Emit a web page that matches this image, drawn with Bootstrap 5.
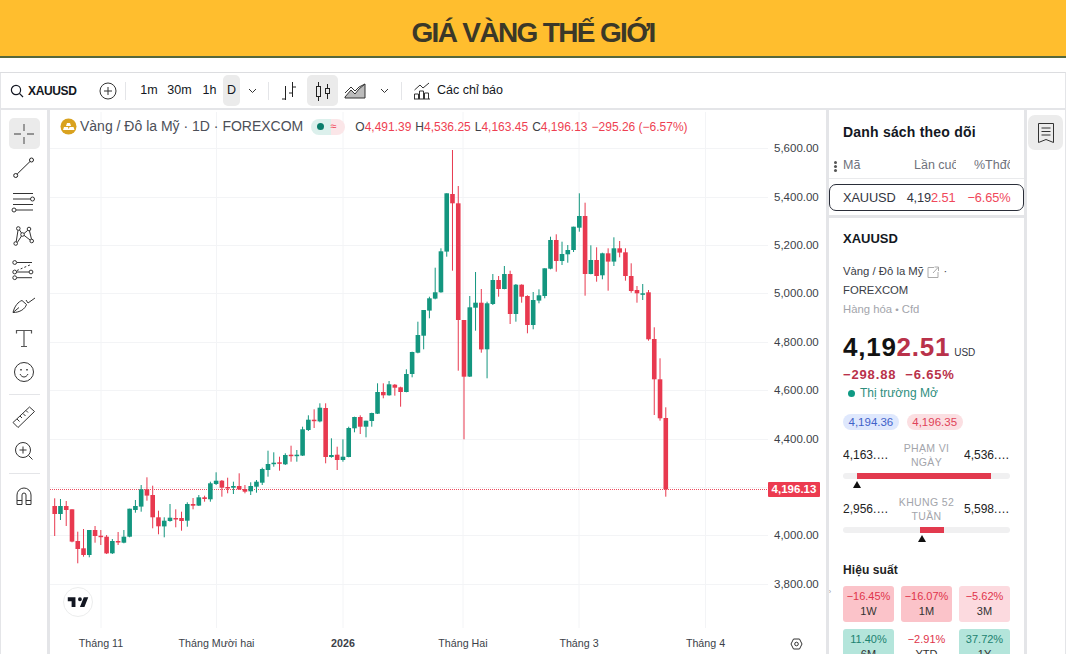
<!DOCTYPE html>
<html lang="vi">
<head>
    <meta charset="UTF-8">
    <meta name="viewport" content="width=device-width, initial-scale=1.0">
    <title>Giá vàng thế giới</title>
    <link href="https://cdn.jsdelivr.net/npm/bootstrap@5.3.0/dist/css/bootstrap.min.css" rel="stylesheet">
    <style>
        html, body { height: 100%; }
        body {
            font-family: "Liberation Sans", Arial, sans-serif;
            color: #131722;
            background: #fff;
            overflow: hidden;
        }
        .page-head {
            height: 58px;
            padding-top: 9px;
            background: #ffbe2e;
            border-bottom: 2px solid #56683c;
        }
        .page-head h1 {
            font-size: 28px;
            font-weight: 700;
            letter-spacing: -1.65px;
            color: #3b3828;
            margin: 0;
        }
        .tv-widget {
            margin-top: 14px;
            height: 582px;
            background: #e4e5e8;
            border-top: 1px solid #dcdde0;
            border-right: 1px solid #e4e5e8;
        }
        .top-bar {
            height: 35px;
            background: #fff;
            padding-left: 9px;
            border-left: 1px solid #e4e5e8;
            font-size: 12px;
        }
        .sym-name { font-weight: 700; font-size: 12px; letter-spacing: -.35px; margin-left: 4px; width: 71px; }
        .bar-sep { width: 1px; height: 18px; background: #e4e5e8; }
        .tf-btn {
            height: 31px;
            padding: 0;
            border: 0;
            border-radius: 5px;
            font-size: 12.5px;
            color: #131722;
            background: transparent;
            display: flex;
            align-items: center;
            justify-content: center;
        }
        .tf-active { background: #ebebeb; }
        .main-row { margin-top: 2px; height: 544px; gap: 3px; }
        .draw-bar { width: 47px; background: #fff; padding-top: 7px; flex: none; border-left: 1px solid #e4e5e8; }
        .draw-item { width: 31px; height: 34px; display: flex; align-items: center; justify-content: center; flex: none; }
        .draw-active { background: #ebebeb; border-radius: 5px; height: 31px; margin: 1px 0 2px; }
        .draw-sep { width: 31px; height: 1px; background: #e4e5e8; margin: 5px 0; flex: none; }
        .chart-pane { width: 776px; flex: none; background: #fff; overflow: hidden; }
        .chart-pane svg { display: block; }
        .chart-legend {
            position: absolute;
            left: 10px;
            top: 6px;
            font-size: 14px;
            color: #4c4f58;
            white-space: nowrap;
        }
        .coin { margin-right: 3px; }
        .status-pill {
            margin-left: 8px;
            width: 34px;
            height: 16px;
            border-radius: 8px;
            background: linear-gradient(90deg, #dcf0ec 60%, #fbe6e8 60%);
            font-size: 11px;
            color: #ef4a5c;
        }
        .status-dot { width: 7px; height: 7px; border-radius: 50%; background: #0b7d6b; margin: 0 6px 0 6px; }
        .ohlc { font-size: 12px; margin-left: 10px; color: #3d3f47; }
        .ohlc b { font-weight: 400; color: #ee3f52; margin-right: 4px; }
        .watch-pane { width: 195px; flex: none; background: #e4e5e8; overflow: hidden; }
        .watch-list { background: #fff; height: 105px; }
        .watch-title { font-weight: 700; font-size: 14px; letter-spacing: .2px; padding: 12px 0 0 14px; height: 42px; color: #131722; }
        .watch-head { height: 27px; font-size: 12.5px; color: #6f727c; border-bottom: 1px solid #e9eaec; padding-left: 14px; position: relative; }
        .dots { position: absolute; left: 5px; top: 9px; width: 3px; height: 3px; border-radius: 50%; background: #555; box-shadow: 0 4px 0 #555, 0 8px 0 #555; }
        .col-last { margin-left: 55px; width: 42px; overflow: hidden; white-space: nowrap; }
        .col-chg { margin-left: 18px; width: 36px; overflow: hidden; white-space: nowrap; }
        .watch-sel {
            margin: 5px 0 0;
            height: 27px;
            border: 1px solid #2a2e39;
            border-radius: 7px;
            padding-left: 13px;
            font-size: 12.8px;
            letter-spacing: -.12px;
            color: #33363f;
        }
        .red-soft { color: #f0475a; }
        .sel-price { margin-left: 11px; }
        .sel-chg { margin-left: 12px; }
        .detail-box { background: #fff; height: 440px; margin-top: 3px; padding: 13px 14px; }
        .detail-sym { font-size: 13px; font-weight: 700; line-height: 16px; }
        .detail-line { font-size: 11.3px; line-height: 19px; color: #3a3d46; }
        .detail-gray { color: #a3a5ab; }
        .big-price { font-size: 26px; font-weight: 700; letter-spacing: .75px; line-height: 30px; color: #121212; margin-top: 13px; }
        .big-price b, .big-chg { color: #b9324a; }
        .big-cur { font-size: 10px; font-weight: 400; letter-spacing: 0; color: #33363f; margin-left: 0; }
        .big-chg { font-size: 13px; font-weight: 700; letter-spacing: .85px; line-height: 16px; margin-top: -1px; }
        .market-open { font-size: 12px; line-height: 16px; color: #2d8e7e; margin-top: 2px; padding-left: 5px; }
        .market-dot { width: 7px; height: 7px; border-radius: 50%; background: #0f9a84; margin-right: 5px; }
        .quote-pills { margin-top: 13px; gap: 8px; }
        .quote-pill { font-size: 11.5px; line-height: 16px; height: 16px; padding: 0 5.5px; border-radius: 8px; }
        .pill-bid { background: #dfe8fd; color: #3f62c9; }
        .pill-ask { background: #fbdfe2; color: #e04359; }
        .range-row { font-size: 12px; color: #222; }
        .range-val { width: 46px; }
        .range-lbl { font-size: 10.5px; line-height: 14px; color: #a3a5ab; text-align: center; flex: 1; letter-spacing: .35px; }
        .range-track { height: 6px; border-radius: 3px; background: #f0f0f1; position: relative; }
        .range-fill { position: absolute; top: 0; bottom: 0; background: #e23a4e; }
        .range-mark { position: absolute; top: 8px; width: 0; height: 0; border-left: 4.5px solid transparent; border-right: 4.5px solid transparent; border-bottom: 7px solid #111; }
        .perf-title { font-size: 12px; font-weight: 700; letter-spacing: .1px; color: #222; line-height: 16px; margin-top: 29px; }
        .perf-grid { display: grid; grid-template-columns: repeat(3, 51px); gap: 7px; margin-top: 8px; }
        .perf-tile { height: 36px; border-radius: 3px; text-align: center; font-size: 11px; line-height: 15px; padding-top: 3px; color: #e0344a; }
        .perf-tile span { display: block; color: #333; }
        .t-red { background: #fbc3c9; }
        .t-pale { background: #fcdadf; }
        .t-green { background: #b4e5db; color: #1c8270; }
        .tab-handle { position: absolute; left: -2px; top: 470px; width: 6px; height: 24px; background: #fff; border-radius: 3px; font-size: 7px; color: #999; line-height: 24px; text-align: center; }
        .side-rail { flex: 1; background: #fff; padding: 5px 1px; margin-left: -1px; border-left: 1px solid #e4e5e8; }
        .rail-btn { width: 35px; height: 35px; border-radius: 7px; background: #ececec; }
    </style>
</head>
<body>
    <header class="page-head d-flex align-items-center justify-content-center">
        <h1>GIÁ VÀNG THẾ GIỚI</h1>
    </header>

    <div class="tv-widget">
        <!-- top toolbar -->
        <div class="top-bar d-flex align-items-center">
            <svg width="14" height="14" viewBox="0 0 14 14" fill="none" stroke="#131722" stroke-width="1.2"><circle cx="6" cy="6" r="4.6"/><path d="M9.4 9.4 13 13"/></svg>
            <span class="sym-name">XAUUSD</span>
            <svg width="18" height="18" viewBox="0 0 18 18" fill="none" stroke="#333" stroke-width="1"><circle cx="9" cy="9" r="8"/><path d="M9 5v8M5 9h8"/></svg>
            <span class="bar-sep ms-2"></span>
            <button class="tf-btn" style="width:28px;margin-left:9px">1m</button>
            <button class="tf-btn" style="width:33px">30m</button>
            <button class="tf-btn" style="width:27px">1h</button>
            <button class="tf-btn tf-active" style="width:17px">D</button>
            <svg class="ms-2" width="9" height="6" viewBox="0 0 9 6" fill="none" stroke="#333"><path d="M1 1l3.5 3.5L8 1"/></svg>
            <span class="bar-sep" style="margin-left:11px"></span>
            <svg style="margin-left:11px" width="18" height="20" viewBox="0 0 18 20" fill="none" stroke="#222"><path d="M5.5 5v14M2 18h3.5M12.5 1v15M12.5 6H16M9 12h3.5"/></svg>
            <button class="tf-btn tf-active" style="width:31px;margin-left:9px">
                <svg width="16" height="22" viewBox="0 0 16 22" fill="none" stroke="#222"><rect x="1.5" y="6.5" width="4" height="10"/><path d="M3.5 2v4.5M3.5 16.5V21"/><rect x="10.5" y="8.5" width="4" height="5"/><path d="M12.5 4v4.5M12.5 13.5V19"/></svg>
            </button>
            <svg style="margin-left:6px" width="22" height="16" viewBox="0 0 22 16" fill="none" stroke="#333"><path d="M1 14 7 7l4 4 4-5 6-5v14H1z" fill="#bbb"/><path d="M1 10 7 4l4 4 4-4 6-3" /></svg>
            <svg style="margin-left:14px" width="9" height="6" viewBox="0 0 9 6" fill="none" stroke="#333"><path d="M1 1l3.5 3.5L8 1"/></svg>
            <span class="bar-sep" style="margin-left:12px"></span>
            <svg style="margin-left:11px" width="18" height="18" viewBox="0 0 18 18" fill="none" stroke="#333"><path d="M1.5 17V12h4v5M6.5 17V9h4v8M11.500 17V11h4v6M1 17h16"/><path d="M1.500 8 7 3l3 3 6-5"/></svg>
            <span style="font-size:12.5px;margin-left:6px">Các chỉ báo</span>
        </div>

        <div class="main-row d-flex">
            <!-- drawing tools -->
            <nav class="draw-bar d-flex flex-column align-items-center">
                <div class="draw-item draw-active"><svg width="28" height="28" viewBox="0 0 28 28" fill="none" stroke="#777" stroke-width="1.4"><path d="M4 14h7M17 14h7M14 4v7M14 17v7"/></svg></div>
                <div class="draw-item"><svg width="28" height="28" viewBox="0 0 28 28" fill="none" stroke="#222"><circle cx="5.700" cy="21.500" r="2"/><circle cx="21.500" cy="6" r="2"/><path d="M7.200 20 20 7.500"/></svg></div>
                <div class="draw-item"><svg width="28" height="28" viewBox="0 0 28 28" fill="none" stroke="#333"><path d="M3 5.500h20M3 11h17.500M3 16.500h20M6 22h17"/><circle cx="22.500" cy="11" r="2"/><circle cx="4" cy="22" r="2"/></svg></div>
                <div class="draw-item"><svg width="28" height="28" viewBox="0 0 28 28" fill="none" stroke="#333"><circle cx="8.300" cy="6.500" r="1.800"/><circle cx="19" cy="7" r="1.800"/><circle cx="12.500" cy="12.500" r="1.800"/><circle cx="5.700" cy="21.500" r="1.800"/><circle cx="21.700" cy="19" r="1.800"/><path d="M6.200 19.800 8 8.300M9.500 8l2 3M14 11.500l3.800-3.200M19.500 9l2 8.200M14 13.300l6.200 4.800M7.300 20.500l4.200-6.500"/></svg></div>
                <div class="draw-item"><svg width="28" height="28" viewBox="0 0 28 28" fill="none" stroke="#333"><circle cx="4.700" cy="6.500" r="1.900"/><circle cx="4.700" cy="16" r="1.900"/><circle cx="21" cy="16" r="1.900"/><circle cx="4.700" cy="21.700" r="1.900"/><path d="M7 6.500h15M7 16h12M7 21.700h15"/><path d="M7 14.500 21 8.500" stroke-dasharray="2 2"/></svg></div>
                <div class="draw-item"><svg width="28" height="28" viewBox="0 0 28 28" fill="none" stroke="#333"><path d="M3 22.500C4.500 16 8.500 11.500 12 10.500l4.500 4C15 19 10 22.500 3 22.500zM3 22.500l6-5"/><path d="M16 10l2 3 7-5"/></svg></div>
                <div class="draw-item"><svg width="28" height="28" viewBox="0 0 28 28" fill="none" stroke="#555" stroke-width="1.200"><path d="M6.500 9.500V6.500h15v3M14 6.500v16M11 22.500h6"/></svg></div>
                <div class="draw-item"><svg width="28" height="28" viewBox="0 0 28 28" fill="none" stroke="#333"><circle cx="14" cy="14" r="9.500"/><path d="M10 16c1 2 2.500 3 4 3s3-1 4-3"/><path d="M11 11v1.500M17 11v1.500" stroke-width="1.500"/></svg></div>
                <div class="draw-sep"></div>
                <div class="draw-item"><svg width="28" height="28" viewBox="0 0 28 28" fill="none" stroke="#333"><path d="M3 19.500 19.500 4l5 4.500L8 24.500z"/><path d="M7 16l2.500 2.500M10 13l2 2M13 10.500l2.500 2.500M16 7.500l2 2"/></svg></div>
                <div class="draw-item"><svg width="28" height="28" viewBox="0 0 28 28" fill="none" stroke="#333"><circle cx="13" cy="13" r="7.500"/><path d="M18.500 18.500l4 4M13 9.500v7M9.500 13h7"/></svg></div>
                <div class="draw-sep"></div>
                <div class="draw-item"><svg width="28" height="28" viewBox="0 0 28 28" fill="none" stroke="#333"><path d="M7 22.500V13a7 7 0 0 1 14 0v9.500h-5V13a2 2 0 0 0-4 0v9.500zM7 18.500h5M16 18.500h5"/></svg></div>
            </nav>

            <!-- chart -->
            <section class="chart-pane position-relative">
                <svg id="chart" width="776" height="544" viewBox="50 110 776 544"></svg>
                <div class="chart-legend d-flex align-items-center">
                    <svg class="coin" width="17" height="17" viewBox="0 0 17 17"><circle cx="8.500" cy="8.500" r="8" fill="#d9a21f"/><path d="M6 8l1-3h3l1 3zM3 12l1-3h4l1 3zM8.500 12l1-3h4l1 3z" fill="#fff"/></svg>
                    <span>Vàng / Đô la Mỹ · 1D · FOREXCOM</span>
                    <span class="status-pill d-flex align-items-center"><i class="status-dot"></i>≈</span>
                    <span class="ohlc">O<b>4,491.39</b>H<b>4,536.25</b>L<b>4,163.45</b>C<b>4,196.13</b><b>−295.26 (−6.57%)</b></span>
                </div>
            </section>

            <!-- watchlist -->
            <aside class="watch-pane position-relative">
                <div class="watch-list">
                    <div class="watch-title">Danh sách theo dõi</div>
                    <div class="watch-head d-flex align-items-center">
                        <i class="dots"></i>
                        <span style="width:16px">Mã</span>
                        <span class="col-last">Lần cuối</span>
                        <span class="col-chg">%Thđổi</span>
                    </div>
                    <div class="watch-sel d-flex align-items-center">
                        <span>XAUUSD</span>
                        <span class="sel-price">4,19<span class="red-soft">2.51</span></span>
                        <span class="sel-chg red-soft">−6.65%</span>
                    </div>
                </div>
                <div class="detail-box">
                    <div class="detail-sym">XAUUSD</div>
                    <div class="detail-line d-flex align-items-center" style="margin-top:15px">Vàng / Đô la Mỹ
                        <svg class="mx-1" width="12" height="12" viewBox="0 0 12 12" fill="none" stroke="#aaa"><path d="M7 1.500H1v10h10V6M6 7l5-5.500M7.500 1h4v4"/></svg>·</div>
                    <div class="detail-line">FOREXCOM</div>
                    <div class="detail-line detail-gray">Hàng hóa <small>•</small> Cfd</div>
                    <div class="big-price">4,19<b>2.51</b><span class="big-cur ms-1">USD</span></div>
                    <div class="big-chg">−298.88 &nbsp;−6.65%</div>
                    <div class="market-open d-flex align-items-center"><i class="market-dot"></i>Thị trường Mở</div>

                    <div class="quote-pills d-flex">
                        <span class="quote-pill pill-bid">4,194.36</span>
                        <span class="quote-pill pill-ask">4,196.35</span>
                    </div>

                    <div class="range-row d-flex align-items-center" style="margin-top:11px">
                        <span class="range-val text-truncate">4,163.45</span>
                        <span class="range-lbl">PHẠM VI NGÀY</span>
                        <span class="range-val text-truncate">4,536.25</span>
                    </div>
                    <div class="range-track mt-1">
                        <i class="range-fill" style="left:14px;width:134px"></i>
                        <i class="range-mark" style="left:10px"></i>
                    </div>

                    <div class="range-row d-flex align-items-center" style="margin-top:16px">
                        <span class="range-val text-truncate">2,956.20</span>
                        <span class="range-lbl">KHUNG 52 TUẦN</span>
                        <span class="range-val text-truncate">5,598.75</span>
                    </div>
                    <div class="range-track mt-1">
                        <i class="range-fill" style="left:77px;width:24px"></i>
                        <i class="range-mark" style="left:75px"></i>
                    </div>

                    <div class="perf-title">Hiệu suất</div>
                    <div class="perf-grid">
                        <div class="perf-tile t-red">−16.45%<span>1W</span></div>
                        <div class="perf-tile t-red">−16.07%<span>1M</span></div>
                        <div class="perf-tile t-pale">−5.62%<span>3M</span></div>
                        <div class="perf-tile t-green">11.40%<span>6M</span></div>
                        <div class="perf-tile">−2.91%<span>YTD</span></div>
                        <div class="perf-tile t-green">37.72%<span>1Y</span></div>
                    </div>
                </div>
                <div class="tab-handle">›</div>
            </aside>

            <div class="side-rail">
                <div class="rail-btn d-flex align-items-center justify-content-center">
                    <svg width="22" height="26" viewBox="0 0 22 26" fill="none" stroke="#333"><path d="M3.500 3.500h15v19l-7.500-3-7.500 3zM6.500 8h9M6.500 11.500h9M6.500 15h9"/></svg>
                </div>
            </div>
        </div>
    </div>

    <script>
        // candles as [wick top, body top, body bottom, wick bottom, green?], read off in 3x pixels per block
        const G = 1, R = 0;
        const blocks = [
            [430, [[205,228,252,318,R],[207,228,252,270,G],[213,228,240,288,R],[238,238,335,337,R],[305,333,357,400,R],[297,355,375,380,R],[300,300,375,382,G],[288,300,318,338,R],[300,317,320,345,R],[315,320,370,372,R],[327,333,370,372,G],[306,333,336,345,R],[300,320,338,340,G],[236,236,320,322,G],[210,228,240,248,G],[165,178,230,245,G],[142,178,197,212,R],[167,195,262,295,R],[242,262,289,313,R],[262,272,289,322,G],[222,263,273,275,G],[238,264,267,292,R],[245,264,273,302,R],[217,222,272,290,G],[204,222,227,238,R],[195,202,227,228,G],[197,202,207,215,R],[155,160,208,215,G],[127,152,162,165,G],[150,152,173,200,R],[143,171,174,190,R],[155,168,173,192,G],[130,168,178,180,R],[165,177,185,190,R],[157,168,184,195,G],[150,155,170,188,G]]],
            [300, [[503,507,548,555,G],[452,492,510,530,G],[457,488,492,500,G],[470,487,490,512,R],[460,465,493,495,G],[437,464,468,485,R],[450,464,468,485,G],[380,388,467,468,G],[346,359,390,393,G],[328,359,362,384,R],[310,323,364,367,G],[310,324,471,490,R],[415,465,471,473,G],[440,464,480,510,R],[418,470,480,485,G],[380,384,471,472,G],[350,351,385,397,G],[346,351,380,402,R],[362,362,380,412,G],[338,339,363,380,G],[250,276,341,342,G],[250,276,286,295,R],[243,253,286,287,G],[252,254,263,287,R],[260,262,276,320,R],[208,222,276,277,G],[155,156,222,232,G],[65,105,158,160,G],[30,30,107,148,G]]],
            [140, [[470,475,512,535,G],[383,457,476,478,G],[325,334,457,458,G],[160,160,335,350,G],[30,162,190,392,R],[138,190,540,692,R]]],
            [230, [[270,270,440,628,R],[198,232,440,441,G],[126,218,233,302,G],[177,218,358,368,R],[215,220,358,445,G],[132,150,222,225,G],[138,150,177,200,R],[108,132,177,178,G],[122,132,252,282,R],[162,164,252,275,G],[163,164,200,218,R],[196,198,285,310,R],[186,210,285,298,G],[178,196,212,220,G],[115,115,198,205,G],[20,30,116,118,G],[13,30,93,125,R],[35,72,93,105,G],[45,60,73,98,G],[-10,-10,60,66,G]]],
            [140, [[160,228,263,275,G],[188,228,402,467,R],[316,360,402,403,G],[322,360,408,425,R],[338,340,406,418,G],[325,340,365,452,R],[292,325,365,378,G],[303,325,338,352,R],[325,337,408,422,R],[370,408,453,458,R],[438,450,460,488,R],[432,460,462,480,G]]],
            [280, [[30,37,178,182,R],[142,177,298,405,R],[235,298,415,422,R],[382,414,628,650,R]]]
        ];
        const candles = blocks.flatMap(([base, rows]) => rows.map(r => [base + r[0] / 3, base + r[1] / 3, base + r[2] / 3, base + r[3] / 3, r[4]]));

        const out = [];
        const priceY = [[5600, 148], [5400, 197], [5200, 245], [5000, 293], [4800, 342], [4600, 390], [4400, 439], [4000, 535], [3800, 584]];
        const monthX = [[101, 'Tháng 11'], [216.500, 'Tháng Mười hai'], [343, '2026'], [463, 'Tháng Hai'], [579, 'Tháng 3'], [705.500, 'Tháng 4']];

        // grid
        priceY.concat([[4200, 487]]).forEach(([, y]) => out.push(`<path d="M50 ${y + .5}H768" stroke="#f3f4f6"/>`));
        monthX.forEach(([x]) => out.push(`<path d="M${x} 112V628" stroke="#f3f4f6"/>`));

        // last price line
        out.push('<path d="M50 489.500H768" stroke="#ee4a5c" stroke-dasharray="1 1"/>');

        // candles
        candles.forEach((c, i) => {
            const x = 54.700 + i * 5.765;
            const col = c[4] ? '#13967f' : '#e8394f';
            out.push(`<path d="M${x.toFixed(2)} ${c[0].toFixed(1)}V${c[3].toFixed(1)}" stroke="${col}"/>`);
            out.push(`<rect x="${(x - 2.300).toFixed(2)}" y="${c[1].toFixed(1)}" width="4.600" height="${Math.max(c[2] - c[1], 1.500).toFixed(1)}" fill="${col}"/>`);
        });

        // price axis
        priceY.forEach(([p, y]) => {
            out.push(`<text x="774" y="${y + 4}" font-size="11.500" fill="#3c3f48">${p.toLocaleString('en-US')}.00</text>`);
        });
        out.push('<rect x="768" y="482" width="52" height="15" rx="1" fill="#ec3b50"/>');
        out.push('<text x="794" y="493" font-size="11.500" font-weight="700" fill="#fff" text-anchor="middle">4,196.13</text>');

        // time axis
        monthX.forEach(([x, t]) => {
            const bold = t === '2026' ? ' font-weight="700"' : '';
            out.push(`<text x="${x}" y="647" font-size="10.700" fill="#3c3f48" text-anchor="middle"${bold}>${t}</text>`);
        });
        out.push('<path d="M791 644l2.500-5h6l2.500 5-2.500 5h-6z" fill="none" stroke="#333"/><circle cx="796.500" cy="644" r="1.800" fill="none" stroke="#333"/>');

        // tradingview mark
        out.push('<circle cx="78" cy="602" r="14.500" fill="#fff" stroke="#eceded"/>');
        out.push('<path transform="translate(66.500 593.500) scale(.64)" d="M14 6H2v6h6v9h6V6zm14 15h-7l6-15h7l-6 15zm-7-9a3 3 0 100-6 3 3 0 000 6z" fill="#131722"/>');

        const chart = document.getElementById('chart');
        chart.setAttribute('font-family', '"Liberation Sans", Arial, sans-serif');
        chart.innerHTML = out.join('');
    </script>
    <script src="https://cdn.jsdelivr.net/npm/bootstrap@5.3.0/dist/js/bootstrap.bundle.min.js"></script>
</body>
</html>
